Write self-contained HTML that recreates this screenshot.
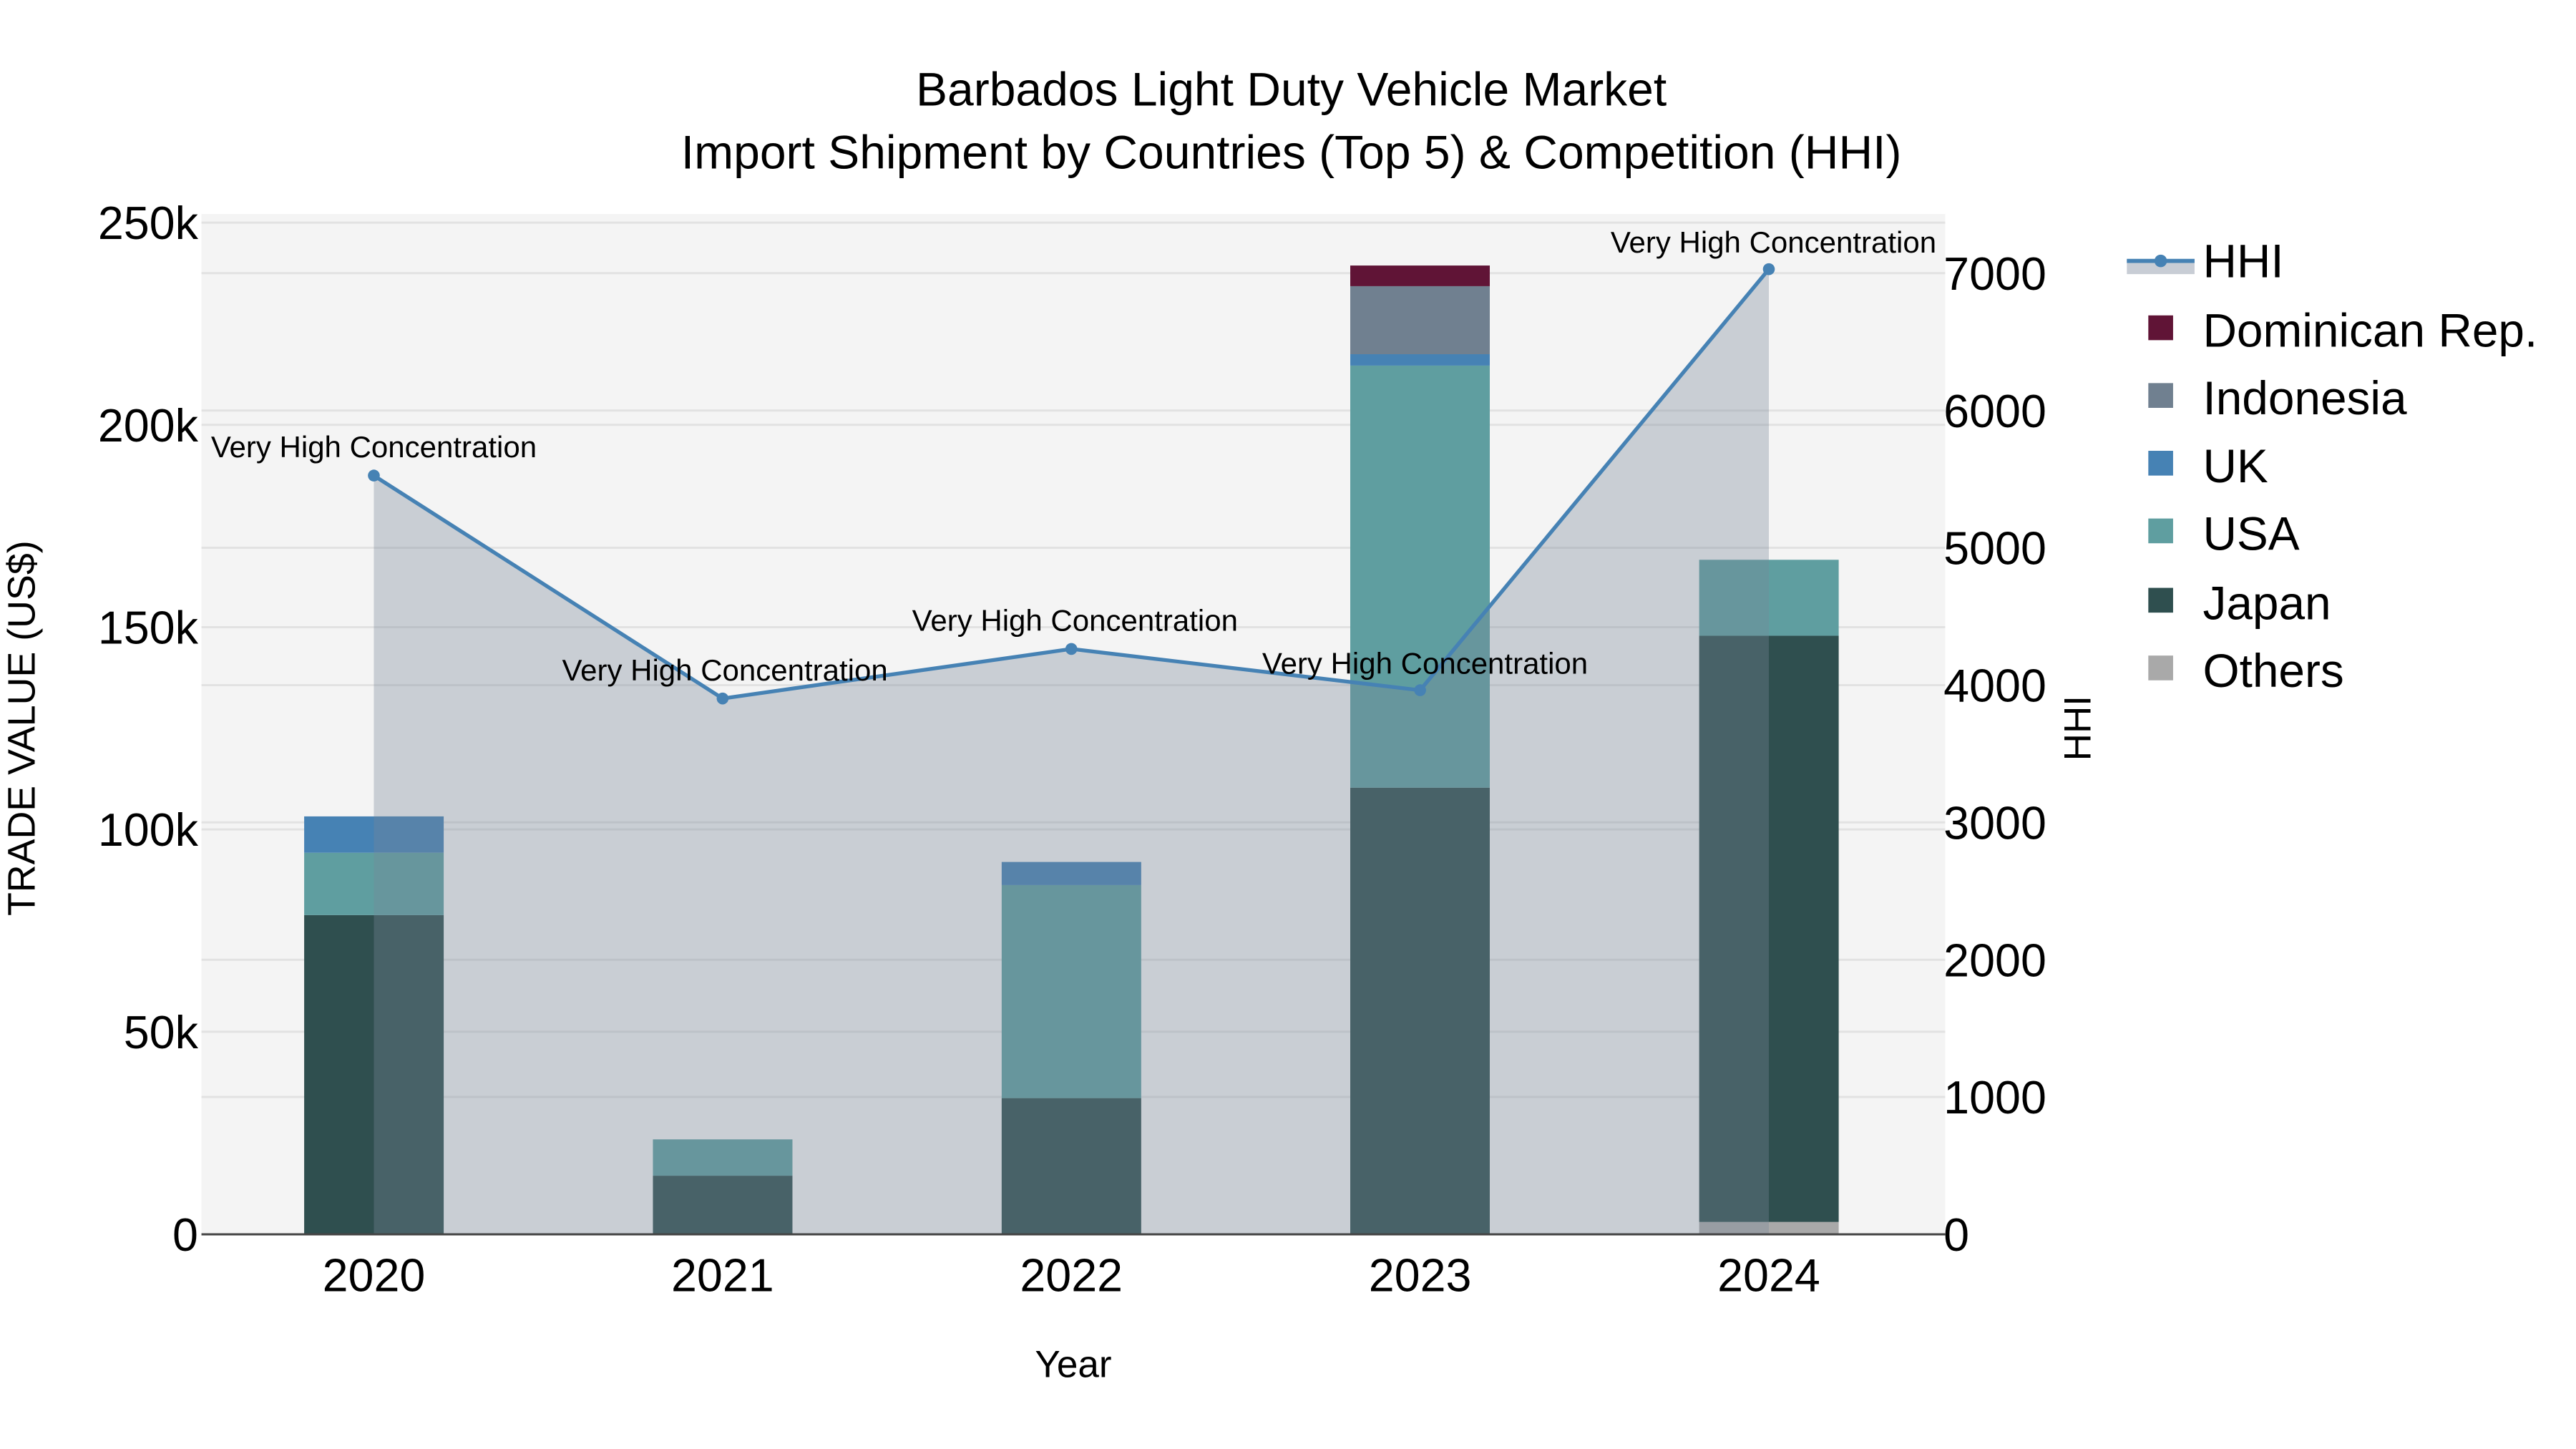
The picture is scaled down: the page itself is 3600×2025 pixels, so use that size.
<!DOCTYPE html>
<html><head><meta charset="utf-8"><style>
html,body{margin:0;padding:0;background:#fff;}
svg{display:block;}
text{font-family:"Liberation Sans",Arial,sans-serif;fill:#000;}
</style></head><body>
<svg width="3600" height="2025" viewBox="0 0 1560 877.5" xmlns="http://www.w3.org/2000/svg">
<rect x="0" y="0" width="1560" height="877.5" fill="#fff"/>
<rect x="122" y="129.6" width="1056" height="617.9" fill="#f4f4f4"/>
<g stroke="#e2e2e2" stroke-width="1.3">
<line x1="122" x2="1178" y1="134.8" y2="134.8"/>
<line x1="122" x2="1178" y1="257.3" y2="257.3"/>
<line x1="122" x2="1178" y1="379.8" y2="379.8"/>
<line x1="122" x2="1178" y1="502.3" y2="502.3"/>
<line x1="122" x2="1178" y1="624.8" y2="624.8"/>
<line x1="122" x2="1178" y1="165.4" y2="165.4"/>
<line x1="122" x2="1178" y1="248.6" y2="248.6"/>
<line x1="122" x2="1178" y1="331.7" y2="331.7"/>
<line x1="122" x2="1178" y1="414.9" y2="414.9"/>
<line x1="122" x2="1178" y1="498.0" y2="498.0"/>
<line x1="122" x2="1178" y1="581.2" y2="581.2"/>
<line x1="122" x2="1178" y1="664.3" y2="664.3"/>
</g>
<g>
<rect x="184.2" y="554.2" width="84.5" height="193.3" fill="#2f4f4f"/>
<rect x="184.2" y="516.4" width="84.5" height="37.8" fill="#5f9ea0"/>
<rect x="184.2" y="494.4" width="84.5" height="22" fill="#4682b4"/>

<rect x="395.4" y="712" width="84.5" height="35.5" fill="#2f4f4f"/>
<rect x="395.4" y="690" width="84.5" height="22" fill="#5f9ea0"/>

<rect x="606.6" y="665" width="84.5" height="82.5" fill="#2f4f4f"/>
<rect x="606.6" y="536" width="84.5" height="129" fill="#5f9ea0"/>
<rect x="606.6" y="522" width="84.5" height="14" fill="#4682b4"/>

<rect x="817.7" y="477" width="84.5" height="270.5" fill="#2f4f4f"/>
<rect x="817.7" y="221.4" width="84.5" height="255.6" fill="#5f9ea0"/>
<rect x="817.7" y="214.5" width="84.5" height="6.9" fill="#4682b4"/>
<rect x="817.7" y="173.3" width="84.5" height="41.2" fill="#708090"/>
<rect x="817.7" y="160.8" width="84.5" height="12.5" fill="#601436"/>

<rect x="1029" y="740" width="84.5" height="7.5" fill="#a9a9a9"/>
<rect x="1029" y="385" width="84.5" height="355" fill="#2f4f4f"/>
<rect x="1029" y="339" width="84.5" height="46" fill="#5f9ea0"/>
</g>
<polygon points="226.4,747.5 226.4,288 437.6,423 648.8,393 860,418 1071.2,163 1071.2,747.5" fill="rgba(119,136,153,0.35)"/>
<polyline points="226.4,288 437.6,423 648.8,393 860,418 1071.2,163" fill="none" stroke="#4682b4" stroke-width="2.3"/>
<g fill="#4682b4">
<circle cx="226.4" cy="288" r="3.6"/><circle cx="437.6" cy="423" r="3.6"/><circle cx="648.8" cy="393" r="3.6"/><circle cx="860" cy="418" r="3.6"/><circle cx="1071.2" cy="163" r="3.6"/>
</g>
<line x1="122" x2="1178" y1="747.5" y2="747.5" stroke="#444" stroke-width="1.3"/>
<g font-size="18.2" text-anchor="middle">
<text x="226.4" y="277">Very High Concentration</text>
<text x="439" y="412">Very High Concentration</text>
<text x="651" y="382">Very High Concentration</text>
<text x="863" y="408">Very High Concentration</text>
<text x="1074" y="153">Very High Concentration</text>
</g>
<g font-size="28.6" text-anchor="middle">
<text x="782" y="64">Barbados Light Duty Vehicle Market</text>
<text x="782" y="102">Import Shipment by Countries (Top 5) &amp; Competition (HHI)</text>
</g>
<g font-size="28" text-anchor="end">
<text x="120" y="144.8">250k</text>
<text x="120" y="267.3">200k</text>
<text x="120" y="389.8">150k</text>
<text x="120" y="512.3">100k</text>
<text x="120" y="634.8">50k</text>
<text x="120" y="757.5">0</text>
</g>
<g font-size="28" text-anchor="start">
<text x="1177" y="175.4">7000</text>
<text x="1177" y="258.6">6000</text>
<text x="1177" y="341.7">5000</text>
<text x="1177" y="424.9">4000</text>
<text x="1177" y="508">3000</text>
<text x="1177" y="591.2">2000</text>
<text x="1177" y="674.3">1000</text>
<text x="1177" y="757.5">0</text>
</g>
<g font-size="28" text-anchor="middle">
<text x="226.4" y="782">2020</text>
<text x="437.6" y="782">2021</text>
<text x="648.8" y="782">2022</text>
<text x="860" y="782">2023</text>
<text x="1071.2" y="782">2024</text>
</g>
<text x="650" y="834" font-size="23" text-anchor="middle">Year</text>
<text transform="translate(21,441) rotate(-90)" font-size="23.3" text-anchor="middle">TRADE VALUE (US$)</text>
<text transform="translate(1266,441) rotate(-90)" font-size="23" text-anchor="middle">HHI</text>
<rect x="1288" y="157" width="41" height="9" fill="#c8cdd5"/>
<line x1="1288" x2="1329" y1="158" y2="158" stroke="#4682b4" stroke-width="2.5"/>
<circle cx="1308.5" cy="158" r="3.8" fill="#4682b4"/>
<g font-size="28.5">
<text x="1334" y="168">HHI</text>
<text x="1334" y="210">Dominican Rep.</text>
<text x="1334" y="251">Indonesia</text>
<text x="1334" y="292">UK</text>
<text x="1334" y="333">USA</text>
<text x="1334" y="375">Japan</text>
<text x="1334" y="416">Others</text>
</g>
<rect x="1301" y="191" width="15" height="15" fill="#601436"/>
<rect x="1301" y="232" width="15" height="15" fill="#708090"/>
<rect x="1301" y="273" width="15" height="15" fill="#4682b4"/>
<rect x="1301" y="314" width="15" height="15" fill="#5f9ea0"/>
<rect x="1301" y="356" width="15" height="15" fill="#2f4f4f"/>
<rect x="1301" y="397" width="15" height="15" fill="#a9a9a9"/>
</svg>
</body></html>
